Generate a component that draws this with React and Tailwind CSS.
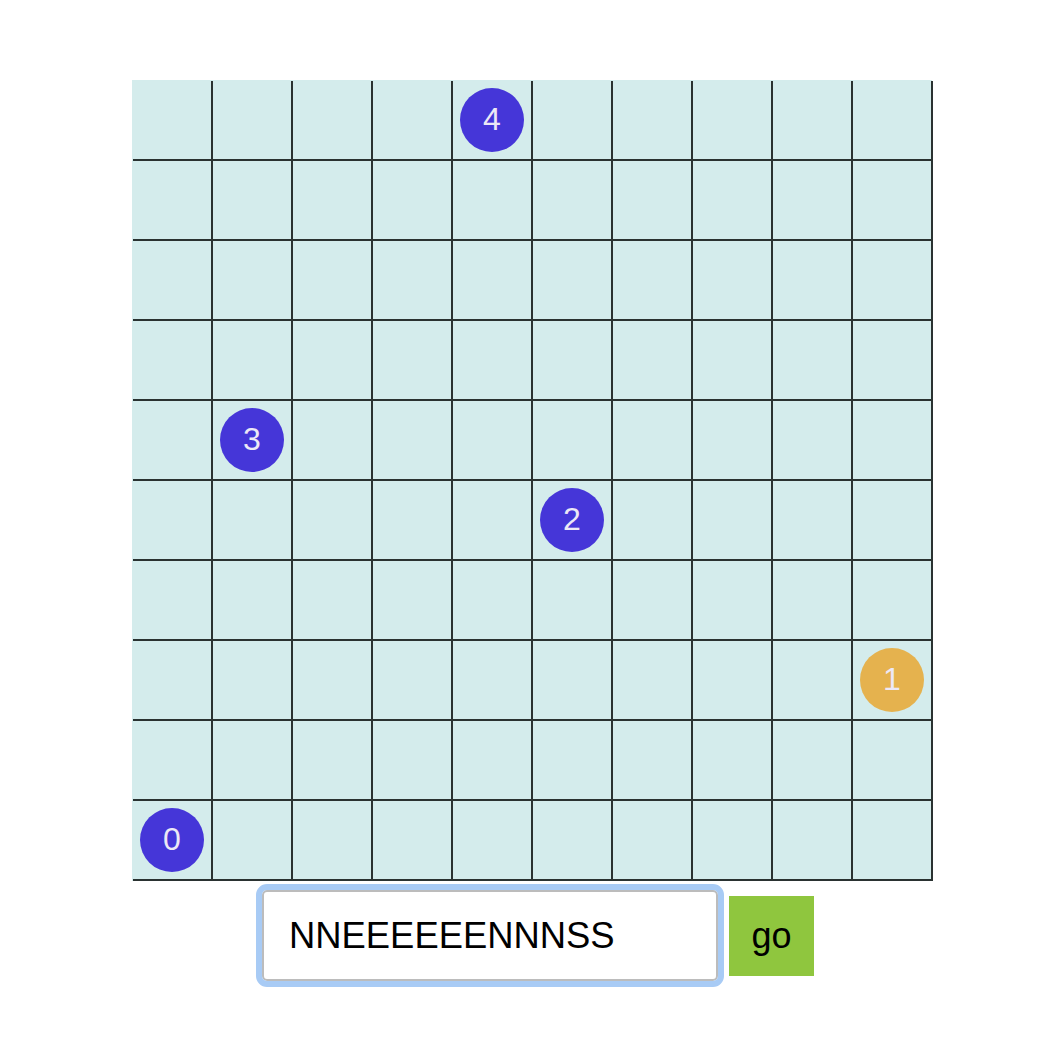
import React from "react";

const robots = {
  "0-4": { label: "4", color: "bg-[#4536d8]" },
  "4-1": { label: "3", color: "bg-[#4536d8]" },
  "5-5": { label: "2", color: "bg-[#4536d8]" },
  "7-9": { label: "1", color: "bg-[#e5b24e]" },
  "9-0": { label: "0", color: "bg-[#4536d8]" },
};

export default function App() {
  const rows = Array.from({ length: 10 }, (_, r) => r);
  const cols = Array.from({ length: 10 }, (_, c) => c);
  return (
    <div
      className="w-[1060px] h-[1058px] bg-white"
      style={{ fontFamily: '"Liberation Sans", Arial, sans-serif' }}
    >
      <div className="pt-[80px] pl-[132px]">
        <div className="w-[800px] bg-[#d4ecec] pl-[1px] pt-[1px]">
          <div className="grid grid-cols-[repeat(10,80px)]">
            {rows.map((r) =>
              cols.map((c) => {
                const robot = robots[`${r}-${c}`];
                return (
                  <div
                    key={`${r}-${c}`}
                    className="w-[80px] h-[80px] box-border border-r-2 border-b-2 border-[#2a3231] flex items-center justify-center"
                  >
                    {robot && (
                      <div
                        className={`w-[64px] h-[64px] rounded-full ${robot.color} flex items-center justify-center text-[#ece8f6] text-[32px] leading-none pb-[2px]`}
                      >
                        {robot.label}
                      </div>
                    )}
                  </div>
                );
              })
            )}
          </div>
        </div>
        <div className="flex items-start pl-[130px] pt-[9px]">
          <input
            readOnly
            value="NNEEEEEENNNSS"
            className="w-[456px] h-[91px] box-border border-2 border-[#bcbcbc] rounded-[5px] bg-white pl-[25px] text-[36.4px] text-black outline-[6px] outline-solid outline-[#a8cbf5] outline-offset-0"
            style={{ fontFamily: '"Liberation Sans", Arial, sans-serif' }}
          />
          <button
            className="ml-[11px] mt-[6px] w-[85px] h-[80px] bg-[#8fc63e] text-black text-[36px] flex items-center justify-center"
            style={{ fontFamily: '"Liberation Sans", Arial, sans-serif' }}
          >
            go
          </button>
        </div>
      </div>
    </div>
  );
}
